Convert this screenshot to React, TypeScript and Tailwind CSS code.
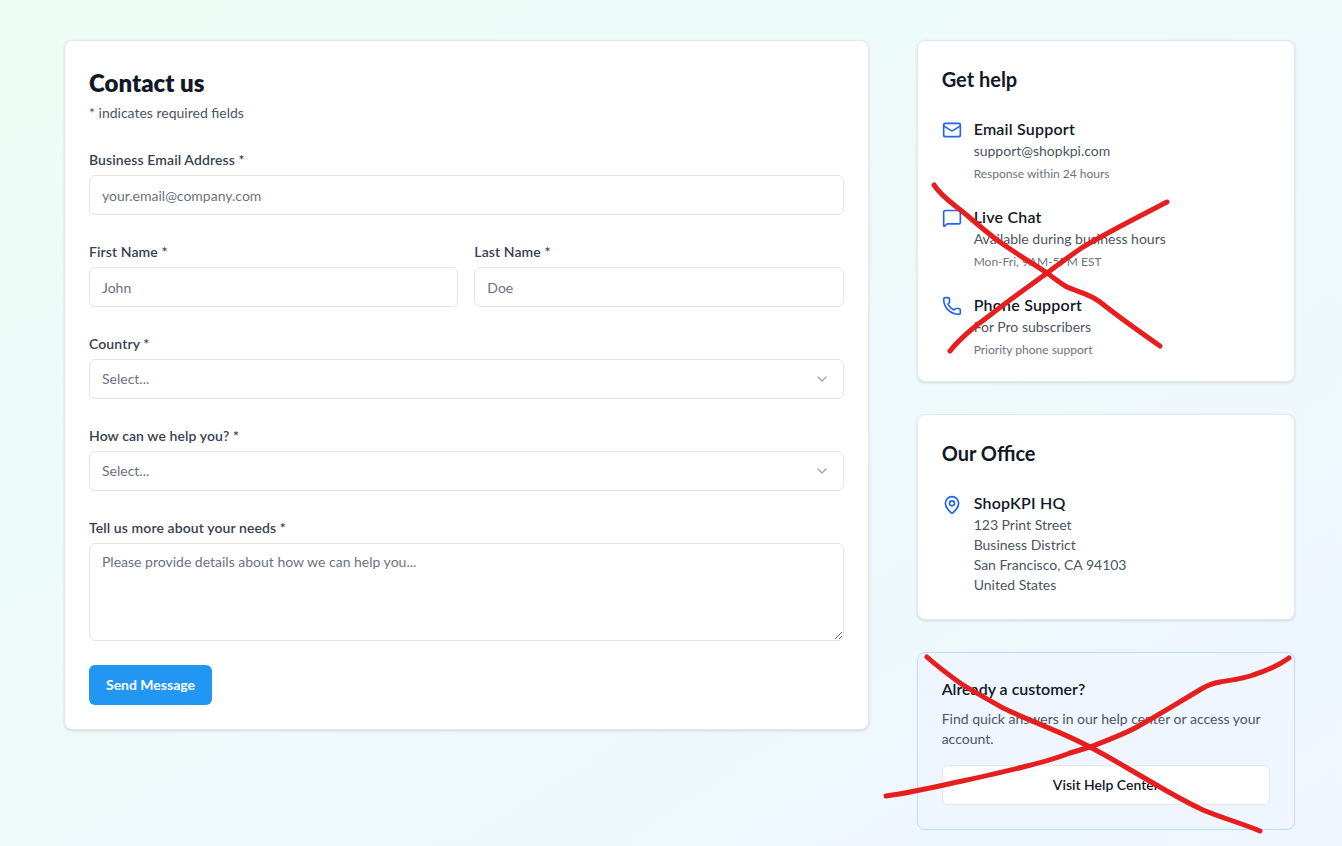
import React from 'react';
import { Mail, MessageSquare, Phone, MapPin, ChevronDown } from 'lucide-react';

const inputBase =
    "w-full h-10 bg-white border border-[#e2e5e9] rounded-md px-3 text-sm outline-none";
const inputClass = inputBase + " text-gray-800 placeholder:text-[#6b7280]";

function Field({ label, children }: { label: string; children: React.ReactNode }) {
    return (
        <div className="flex flex-col">
            <label className="text-sm leading-5 -mt-[1px] mb-[5px] font-semibold tracking-[0.1px] text-[#374151]">{label}</label>
            {children}
        </div>
    );
}

function SelectField({ label }: { label: string }) {
    return (
        <Field label={label}>
            <div className="relative">
                <select defaultValue="" className={inputBase + " appearance-none text-[#6b7280]"}>
                    <option value="">Select...</option>
                </select>
                <ChevronDown className="absolute right-[14px] top-[12px] w-4 h-4 text-[#9ca3af]" />
            </div>
        </Field>
    );
}

function HelpItem({ icon, title, line, note }: { icon: React.ReactNode; title: string; line: string; note: string }) {
    return (
        <div className="flex gap-3">
            <div className="pt-[3px] text-[#2563eb]">{icon}</div>
            <div className="flex flex-col">
                <h3 className="text-base leading-[24px] font-semibold tracking-[0.2px] text-[#111827]">{title}</h3>
                <p className="text-sm leading-5 text-[#4b5563]">{line}</p>
                <p className="text-xs leading-4 mt-[5px] text-[#6b7280]">{note}</p>
            </div>
        </div>
    );
}

// the red crosses drawn over the screenshot
function Scribbles() {
    return (
        <svg className="absolute left-0 top-0 w-[1342px] h-[846px] pointer-events-none" viewBox="0 0 1342 846" fill="none">
            <g stroke="#e61e1e" strokeWidth="5" strokeLinecap="round" strokeLinejoin="round">
                <path d="M934 185 C942 197 952 203 963 212 C975 222 985 231 997 240 C1014 252 1030 262 1047 273 C1054 278 1060 283 1067 287 C1078 292 1090 294 1100 302 C1120 318 1140 332 1160 346" />
                <path d="M950 351 C957 342 967 333 977 325 C988 317 999 308 1010 300 C1022 291 1035 282 1047 273 C1059 264 1071 255 1083 247 C1110 231 1138 217 1167 202" />
                <path d="M927 657 C938 667 949 675 960 683 C974 692 989 700 1003 708 C1032 722 1062 732 1090 747 C1111 758 1132 771 1153 783 C1170 793 1186 802 1203 810 C1222 818 1241 823 1260 831" />
                <path d="M886 796 C908 793 931 788 953 783 C976 778 1000 773 1023 767 C1039 763 1055 759 1070 753 C1077 751 1083 749 1090 747 C1106 741 1122 735 1137 727 C1159 715 1181 701 1203 688 C1208 685 1214 683 1220 682 C1231 680 1242 679 1253 675 C1266 671 1278 666 1289 658" />
            </g>
        </svg>
    );
}

export default function App() {
    return (
        <div className="relative min-h-screen h-[846px] overflow-hidden bg-gradient-to-br from-[#ecfdf5] to-[#eff6ff] pl-16 pr-[47px] pt-10 font-['Lato',sans-serif]">
            <div className="grid grid-cols-3 gap-12 items-start">
                {/* form card */}
                <section className="col-span-2 bg-white border border-[#e5e7eb] rounded-lg shadow-sm p-6">
                    <h1 className="text-2xl leading-8 font-extrabold text-[#111827] mt-[2px]">Contact us</h1>
                    <p className="text-sm leading-5 text-[#4b5563] mt-[4px] mb-[28px]">* indicates required fields</p>

                    <form className="flex flex-col gap-7">
                        <Field label="Business Email Address *">
                            <input className={inputClass} placeholder="your.email@company.com" />
                        </Field>
                        <div className="grid grid-cols-2 gap-4">
                            <Field label="First Name *">
                                <input className={inputClass} placeholder="John" />
                            </Field>
                            <Field label="Last Name *">
                                <input className={inputClass} placeholder="Doe" />
                            </Field>
                        </div>
                        <SelectField label="Country *" />
                        <SelectField label="How can we help you? *" />
                        <Field label="Tell us more about your needs *">
                            <textarea
                                className={inputClass + " h-[98px] py-2 block"}
                                placeholder="Please provide details about how we can help you..."
                            />
                        </Field>
                    </form>

                    <button className="mt-6 h-10 w-[123px] rounded-md bg-[#2196f3] text-white text-sm font-bold">Send Message</button>
                </section>

                <aside className="flex flex-col gap-8">
                    <section className="bg-white border border-[#e5e7eb] rounded-lg shadow-sm px-6 pt-6 pb-[23px]">
                        <h2 className="text-xl leading-7 font-bold text-[#111827] mb-6">Get help</h2>
                        <div className="flex flex-col gap-[23px]">
                            <HelpItem icon={<Mail className="w-5 h-5" />} title="Email Support" line="support@shopkpi.com" note="Response within 24 hours" />
                            <HelpItem icon={<MessageSquare className="w-5 h-5" />} title="Live Chat" line="Available during business hours" note="Mon-Fri, 9AM-5PM EST" />
                            <HelpItem icon={<Phone className="w-5 h-5" />} title="Phone Support" line="For Pro subscribers" note="Priority phone support" />
                        </div>
                    </section>

                    <section className="bg-white border border-[#e5e7eb] rounded-lg shadow-sm p-6">
                        <h2 className="text-xl leading-7 font-bold text-[#111827] mb-6">Our Office</h2>
                        <div className="flex gap-3">
                            <div className="pt-[4px] text-[#2563eb]"><MapPin className="w-5 h-5" /></div>
                            <div className="flex flex-col">
                                <h3 className="text-base leading-6 font-semibold tracking-[0.2px] text-[#111827]">ShopKPI HQ</h3>
                                <p className="text-sm leading-5 text-[#4b5563]">123 Print Street</p>
                                <p className="text-sm leading-5 text-[#4b5563]">Business District</p>
                                <p className="text-sm leading-5 text-[#4b5563]">San Francisco, CA 94103</p>
                                <p className="text-sm leading-5 text-[#4b5563]">United States</p>
                            </div>
                        </div>
                    </section>

                    <section className="bg-[#eff6ff] border border-[#bfdbfe] rounded-lg p-6">
                        <h3 className="text-base leading-6 font-semibold text-[#111827] mb-2">Already a customer?</h3>
                        <p className="text-sm leading-5 text-[#4b5563] mb-4">Find quick answers in our help center or access your account.</p>
                        <button className="w-full h-10 bg-white border border-[#e5e7eb] rounded-md text-sm font-semibold text-[#111827]">Visit Help Center</button>
                    </section>
                </aside>
            </div>
            <Scribbles />
        </div>
    );
}
